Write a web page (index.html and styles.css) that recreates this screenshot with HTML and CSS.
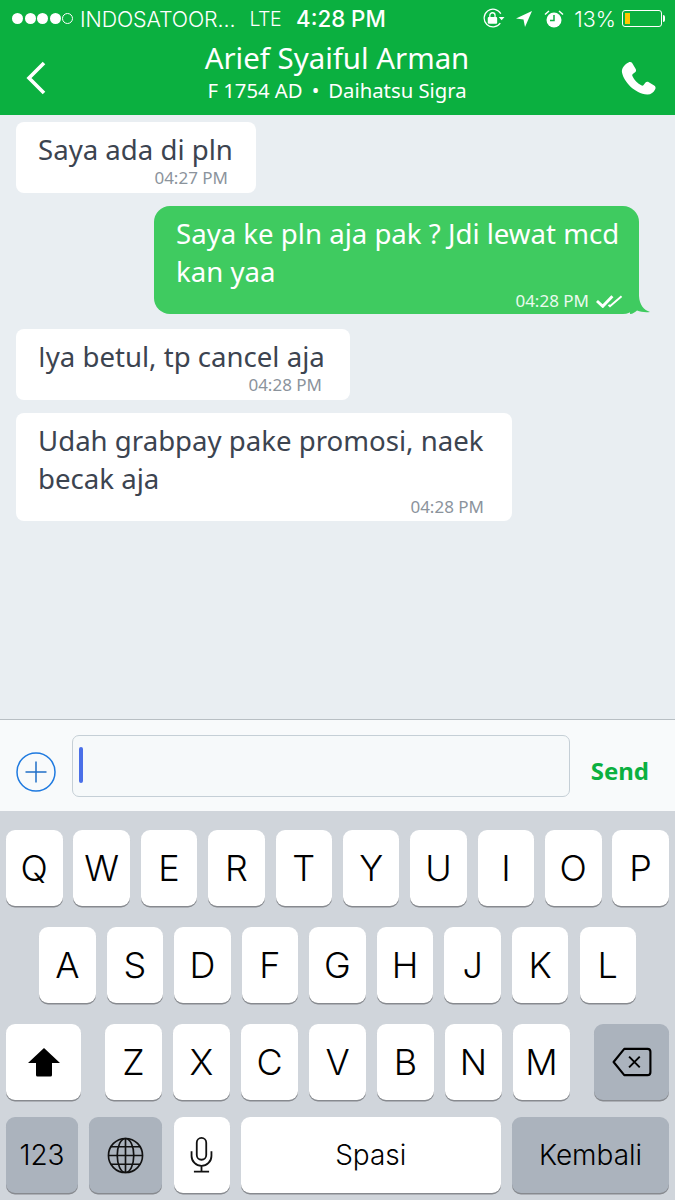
FILE: index.html
```html
<!DOCTYPE html>
<html lang="id">
<head>
<meta charset="utf-8">
<title>Chat</title>
<link rel="stylesheet" href="styles.css">
</head>
<body>
<div class="app">
  <header class="top">
    <div class="status">
      <div class="status-left">
        <span class="dots"><i></i><i></i><i></i><i></i><i class="empty"></i></span>
        <span class="carrier">INDOSATOOR...</span>
        <span class="lte">LTE</span>
      </div>
      <div class="clock">4:28 PM</div>
      <div class="status-right">
        <svg class="ic-lock" viewBox="0 0 22 20" width="23" height="21"><path d="M17.500 14.500A8.500 8.500 0 1 1 18 5.500" fill="none" stroke="#fff" stroke-width="1.200"/><path d="M16 8.500h5.500l-2.700 3.200z" fill="#fff"/><rect x="5.500" y="8.500" width="9" height="6.500" rx="1" fill="#fff"/><path d="M7.500 9V7a2.500 2.500 0 0 1 5 0v2" fill="none" stroke="#fff" stroke-width="1.200"/></svg>
        <svg class="ic-loc" viewBox="0 0 16 16" width="16" height="16"><path d="M16 0 0 7.500l7.500 1 1.500 7.500z" fill="#fff"/></svg>
        <svg class="ic-alarm" viewBox="0 0 20 20" width="20" height="20"><circle cx="10" cy="11" r="7.500" fill="#fff"/><path d="M10 6v5.500H6" fill="none" stroke="#0bb040" stroke-width="1.500"/><path d="M1 5.500 5 2M19 5.500 15 2" stroke="#fff" stroke-width="1.500"/></svg>
        <span class="pct">13%</span>
        <span class="battery"><span class="level"></span></span><span class="nub"></span>
      </div>
    </div>
    <div class="nav">
      <svg class="back" viewBox="0 0 20 34" width="20" height="34"><path d="M18 2 3 17l15 15" fill="none" stroke="#fff" stroke-width="3.600"/></svg>
      <div class="title">
        <div class="name">Arief Syaiful Arman</div>
        <div class="sub">F 1754 AD<span class="sep">•</span>Daihatsu Sigra</div>
      </div>
      <svg class="phone" viewBox="0 0 38 38" width="38" height="38"><path d="M8.500 1.500c1.600-.8 3-.4 3.800.8l3.400 5.600c.7 1.200.4 2.600-.6 3.400l-2.300 1.800c-.6.500-.7 1.200-.4 1.900 1.900 4.200 5 7.500 9.300 9.500.7.300 1.400.1 1.900-.5l1.700-2.200c.9-1.100 2.300-1.300 3.500-.6l5.400 3.300c1.400.9 1.700 2.300 1 3.700-1.600 3.300-4.500 5.500-8 5.300C14.500 32.500 4 21 2 11.500 1.300 7.500 4.500 3.500 8.500 1.500z" fill="#fff"/></svg>
    </div>
  </header>

  <main class="chat">
    <div class="bubble in b1">
      <p>Saya ada di pln</p>
      <time>04:27 PM</time>
    </div>
    <div class="bubble out b2">
      <p>Saya ke pln aja pak ? Jdi lewat mcd kan yaa</p>
      <div class="meta">
        <time>04:28 PM</time>
        <svg class="ticks" viewBox="0 0 28 14" width="27" height="14"><path d="M1 7l6 5.500L17 2" fill="none" stroke="#fff" stroke-width="3"/><path d="M13 11l1.500 1.500L26.500 2" fill="none" stroke="#fff" stroke-width="2"/></svg>
      </div>
      <svg class="tail" viewBox="0 0 20 18" width="20" height="18"><path d="M9 0C9.500 9 14 14 20 16 15 16.500 11 16 7 14.500 5 16 3 18 0 18L0 0z" fill="#3fcb60"/></svg>
    </div>
    <div class="bubble in b3">
      <p><span class="plain-i">I</span>ya betul, tp cancel aja</p>
      <time>04:28 PM</time>
    </div>
    <div class="bubble in b4">
      <p>Udah grabpay pake promosi, naek becak aja</p>
      <time>04:28 PM</time>
    </div>
  </main>

  <div class="composer">
    <svg class="plus" viewBox="0 0 40 40" width="40" height="40"><circle cx="20" cy="20" r="19" fill="none" stroke="#1f7ae0" stroke-width="1.500"/><path d="M20 9.500v21M9.500 20h21" stroke="#1f6fc8" stroke-width="1.500"/></svg>
    <div class="field"><span class="caret"></span></div>
    <div class="send">Send</div>
  </div>

  <section class="kb">
    <div class="row">
      <div class="key">Q</div><div class="key">W</div><div class="key">E</div><div class="key">R</div><div class="key">T</div><div class="key">Y</div><div class="key">U</div><div class="key">I</div><div class="key">O</div><div class="key">P</div>
    </div>
    <div class="row r2">
      <div class="key">A</div><div class="key">S</div><div class="key">D</div><div class="key">F</div><div class="key">G</div><div class="key">H</div><div class="key">J</div><div class="key">K</div><div class="key">L</div>
    </div>
    <div class="row r3">
      <div class="key wide">
        <svg viewBox="0 0 34 30" width="34" height="30"><path d="M17 1 33 16H25v12a1.500 1.500 0 0 1-1.500 1.500h-13A1.500 1.500 0 0 1 9 28V16H1z" fill="#000"/></svg>
      </div>
      <div class="letters">
        <div class="key">Z</div><div class="key">X</div><div class="key">C</div><div class="key">V</div><div class="key">B</div><div class="key">N</div><div class="key">M</div>
      </div>
      <div class="key wide dark">
        <svg viewBox="0 0 42 32" width="42" height="31"><path d="M13 2h24a3 3 0 0 1 3 3v21a3 3 0 0 1-3 3H13L2 15.500z" fill="none" stroke="#000" stroke-width="2.200" stroke-linejoin="round"/><path d="M18 10l11 11M29 10 18 21" stroke="#000" stroke-width="2"/></svg>
      </div>
    </div>
    <div class="row r4">
      <div class="key dark k123">123</div>
      <div class="key dark kglobe">
        <svg viewBox="0 0 38 38" width="37" height="37"><g fill="none" stroke="#111" stroke-width="1.700"><circle cx="19" cy="19" r="17.500"/><ellipse cx="19" cy="19" rx="8.500" ry="17.500"/><path d="M19 1.500v35M1.500 19h35M4 10h30M4 28h30"/></g></svg>
      </div>
      <div class="key kmic">
        <svg viewBox="0 0 24 38" width="23" height="36"><g fill="none" stroke="#111" stroke-width="1.900"><rect x="7" y="1" width="10" height="23" rx="5"/><path d="M1.500 15v5a10.500 10.500 0 0 0 21 0v-5M12 30.500V36M4 36.500h16"/></g></svg>
      </div>
      <div class="key kspace">Spasi</div>
      <div class="key dark kreturn">Kembali</div>
    </div>
  </section>
</div>
</body>
</html>
```

FILE: styles.css
```css
* { box-sizing: border-box; }
html, body { margin: 0; padding: 0; }
body { width: 675px; height: 1200px; overflow: hidden; background: #e9eef2; }
.app { width: 675px; height: 1200px; display: flex; flex-direction: column; font-family: "Noto Sans", "Open Sans", sans-serif; }

.top { height: 115px; background: #0bb040; color: #fff; flex: none; }
.status { height: 37px; display: flex; align-items: center; justify-content: space-between; padding: 0 10px 0 12px; font-family: Inter, "Liberation Sans", sans-serif; }
.status-left { display: flex; align-items: center; width: 284px; font-weight: 300; }
.dots { display: flex; gap: 1.500px; margin-right: 7px; }
.dots i { width: 11px; height: 11px; border-radius: 50%; background: #fff; }
.dots i.empty { background: none; border: 1px solid #fff; }
.carrier { font-size: 21.400px; letter-spacing: -.1px; margin-right: 14px; white-space: nowrap; }
.lte { font-size: 19.500px; letter-spacing: -.5px; }
.clock { font-size: 22.300px; font-weight: 500; white-space: nowrap; flex: 1; }
.status-right { display: flex; align-items: center; }
.ic-lock { margin-right: 11px; }
.ic-loc { margin-right: 12px; }
.ic-alarm { margin-right: 10px; }
.pct { font-size: 21.500px; font-weight: 300; margin-right: 6px; }
.battery { width: 40px; height: 17px; border: 1px solid #fff; border-radius: 3px; padding: 2px; display: block; }
.level { display: block; width: 5px; height: 100%; background: #ffc800; }
.nub { width: 2px; height: 7px; background: #fff; margin-left: 1px; border-radius: 0 2px 2px 0; }

.nav { height: 78px; display: flex; align-items: center; padding: 0 17px 0 26px; }
.back { margin-top: 4px; flex: none; }
.title { flex: 1; text-align: center; align-self: flex-start; padding: 2px 0 0 8px; }
.name { font-size: 29.400px; line-height: 38px; font-weight: 400; white-space: nowrap; }
.sub { font-size: 20.300px; line-height: 26px; white-space: nowrap; }
.sep { margin: 0 9px; }
.phone { flex: none; margin-top: 8px; }

.chat { flex: 1; background: #e9eef2; display: flex; flex-direction: column; align-items: flex-start; padding: 7px 0 0 16px; }
.bubble { background: #fff; border-radius: 8px; color: #3c4450; font-size: 27.600px; line-height: 38px; position: relative; padding: 8px 0 0 22px; }
.bubble p { margin: 0; }
.in p { padding-right: 14px; }
.plain-i { font-family: "Open Sans", sans-serif; }
.bubble time { display: block; font-size: 17px; line-height: 20px; color: #8b939c; text-align: right; }
.in time { margin-right: 28px; }
.b1 { width: 240px; height: 71px; }
.b2 { width: 485px; height: 108px; margin: 13px 0 0 138px; padding-right: 10px; background: #3fcb60; color: #fff; border-radius: 16px; }
.meta { display: flex; justify-content: flex-end; align-items: center; gap: 7px; height: 20px; padding-right: 6px; margin-top: 1px; }
.meta time { color: #eafaee; }
.tail { position: absolute; right: -11px; bottom: 0; }
.b3 { width: 334px; height: 71px; margin-top: 15px; }
.b4 { width: 496px; height: 108px; margin-top: 13px; }

.composer { height: 92px; flex: none; display: flex; align-items: center; background: #f8fafb; border-top: 1px solid #b8bfc4; padding: 10px 26px 0 16px; }
.plus { flex: none; margin-right: 16px; margin-top: 2px; }
.field { width: 498px; height: 62px; margin-top: -10px; border: 1.500px solid #c5cfd6; border-radius: 7px; background: #f6f9fa; padding: 11px 0 0 6px; }
.caret { display: block; width: 3.500px; height: 36px; border-radius: 2px; background: #4a6fe8; }
.send { margin-left: 21px; font-size: 24px; font-weight: 700; color: #0bb040; white-space: nowrap; }

.kb { flex: none; height: 389px; background: #d0d5db; padding: 19px 6px 0; display: flex; flex-direction: column; font-family: Inter, "Liberation Sans", sans-serif; }
.row { display: flex; justify-content: space-between; height: 76px; margin-bottom: 21px; }
.r2 { padding: 0 33px; }
.r3 { margin-bottom: 17px; }
.letters { display: flex; gap: 11.500px; }
.key { width: 56.500px; height: 76px; background: #fff; border-radius: 9px; box-shadow: 0 1.500px 0 #878a8f; display: flex; align-items: center; justify-content: center; font-size: 36px; font-weight: 300; color: #000; }
.wide { width: 75px; }
.dark { background: #abb3bd; }
.r4 .key { font-size: 28px; }
.k123 { width: 72px; }
.kglobe { width: 73px; }
.kmic { width: 56px; }
.kspace { width: 260px; }
.kreturn { width: 157px; }
```
